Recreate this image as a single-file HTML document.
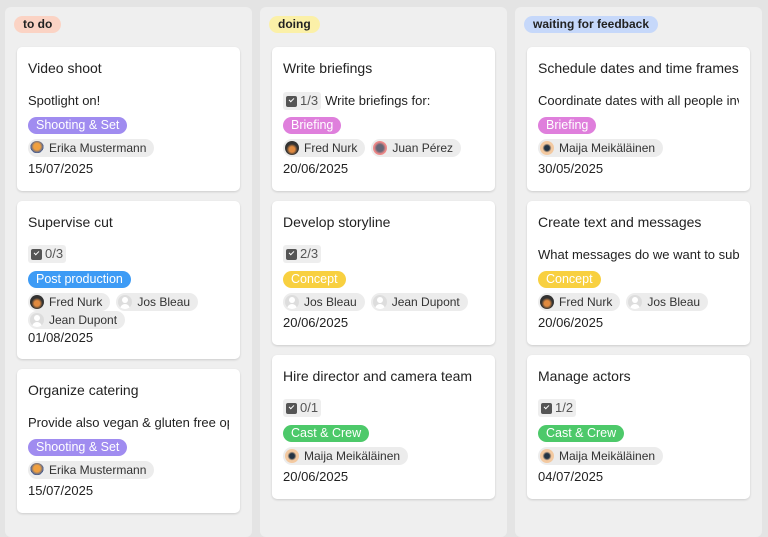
<!DOCTYPE html>
<html><head><meta charset="utf-8"><style>
*{box-sizing:border-box;margin:0;padding:0}
body{width:768px;height:528px;overflow:hidden;background:#e4e4e4;font-family:"Liberation Sans",sans-serif;color:#222;position:relative}
.col{position:absolute;top:7px;width:247px;height:530px;background:#efefef;border-radius:6px}
.hd{position:absolute;top:9px;left:9px;height:17px;line-height:17px;padding:0 9px;border-radius:9px;font-size:12px;font-weight:bold;color:#222}
.card{position:absolute;left:12px;width:223px;background:#fff;border-radius:5px;box-shadow:0 1px 2px rgba(0,0,0,.15);padding:0 11px;overflow:hidden;white-space:nowrap}
.t{position:absolute;top:12px;left:11px;font-size:14px;line-height:18px}
.r2{position:absolute;top:44px;left:11px;width:201px;overflow:hidden;font-size:13px;line-height:20px;display:flex;align-items:center}
.ck{display:inline-flex;align-items:center;background:#eee;border-radius:3px;padding:0 3px;height:18px;color:#555;font-size:13px;margin-right:4px}
.ck i{display:inline-block;width:11px;height:11px;background:#555;border-radius:2px;margin-right:3px;position:relative}
.ck i:after{content:"";position:absolute;left:3px;top:2px;width:4px;height:2px;border-left:1.5px solid #fff;border-bottom:1.5px solid #fff;transform:rotate(-45deg)}
.tag{position:absolute;top:70px;left:11px;height:17px;line-height:17px;padding:0 8px;border-radius:9px;color:#fff;font-size:12.5px}
.ppl{position:absolute;top:92px;left:11px;width:210px;display:flex;flex-wrap:wrap;gap:0 6px}
.p{display:inline-flex;align-items:center;height:18px;background:#ececec;border-radius:9px;padding:0 8px 0 2px;font-size:12px;color:#333}
.av{width:14px;height:14px;border-radius:50%;margin-right:5px;background:#ddd;position:relative;overflow:hidden}
.u:before{content:"";position:absolute;left:4px;top:2px;width:6px;height:6px;border-radius:50%;background:#fff}
.u:after{content:"";position:absolute;left:2px;top:9px;width:10px;height:8px;border-radius:5px 5px 0 0;background:#fff}
.e{background:radial-gradient(circle at 50% 40%,#f0a040 30%,#3a5a9a 60%,#eee 61%)}
.f{background:radial-gradient(circle at 50% 60%,#e08a40 25%,#333 50%)}
.j{background:radial-gradient(circle at 50% 50%,#667 35%,#e88 60%)}
.m{background:radial-gradient(circle at 50% 50%,#234 25%,#f3c9a0 45%)}
.d{position:absolute;top:113px;left:11px;font-size:13px;line-height:18px}
</style></head><body>

<div class="col" style="left:5px">
<div class="hd" style="background:#fbd3c4">to do</div>
<div class="card" style="top:40px;height:144px"><div class="t">Video shoot</div><div class="r2">Spotlight on!</div><div class="tag" style="background:#a08cf0">Shooting &amp; Set</div><div class="ppl"><span class="p"><span class="av e"></span>Erika Mustermann</span></div><div class="d">15/07/2025</div></div>
<div class="card" style="top:194px;height:158px"><div class="t">Supervise cut</div><div class="r2"><span class="ck"><i></i>0/3</span></div><div class="tag" style="background:#3d9bf5">Post production</div><div class="ppl"><span class="p"><span class="av f"></span>Fred Nurk</span><span class="p"><span class="av u"></span>Jos Bleau</span><span class="p"><span class="av u"></span>Jean Dupont</span></div><div class="d" style="top:128px">01/08/2025</div></div>
<div class="card" style="top:362px;height:144px"><div class="t">Organize catering</div><div class="r2">Provide also vegan &amp; gluten free op</div><div class="tag" style="background:#a08cf0">Shooting &amp; Set</div><div class="ppl"><span class="p"><span class="av e"></span>Erika Mustermann</span></div><div class="d">15/07/2025</div></div>
</div>

<div class="col" style="left:260px">
<div class="hd" style="background:#fbf0a8">doing</div>
<div class="card" style="top:40px;height:144px"><div class="t">Write briefings</div><div class="r2"><span class="ck"><i></i>1/3</span>Write briefings for:</div><div class="tag" style="background:#df7fdc">Briefing</div><div class="ppl"><span class="p"><span class="av f"></span>Fred Nurk</span><span class="p"><span class="av j"></span>Juan Pérez</span></div><div class="d">20/06/2025</div></div>
<div class="card" style="top:194px;height:144px"><div class="t">Develop storyline</div><div class="r2"><span class="ck"><i></i>2/3</span></div><div class="tag" style="background:#f8d040">Concept</div><div class="ppl"><span class="p"><span class="av u"></span>Jos Bleau</span><span class="p"><span class="av u"></span>Jean Dupont</span></div><div class="d">20/06/2025</div></div>
<div class="card" style="top:348px;height:144px"><div class="t">Hire director and camera team</div><div class="r2"><span class="ck"><i></i>0/1</span></div><div class="tag" style="background:#4dc96a">Cast &amp; Crew</div><div class="ppl"><span class="p"><span class="av m"></span>Maija Meikäläinen</span></div><div class="d">20/06/2025</div></div>
</div>

<div class="col" style="left:515px">
<div class="hd" style="background:#c6d8fa">waiting for feedback</div>
<div class="card" style="top:40px;height:144px"><div class="t">Schedule dates and time frames</div><div class="r2">Coordinate dates with all people inv</div><div class="tag" style="background:#df7fdc">Briefing</div><div class="ppl"><span class="p"><span class="av m"></span>Maija Meikäläinen</span></div><div class="d">30/05/2025</div></div>
<div class="card" style="top:194px;height:144px"><div class="t">Create text and messages</div><div class="r2">What messages do we want to subr</div><div class="tag" style="background:#f8d040">Concept</div><div class="ppl"><span class="p"><span class="av f"></span>Fred Nurk</span><span class="p"><span class="av u"></span>Jos Bleau</span></div><div class="d">20/06/2025</div></div>
<div class="card" style="top:348px;height:144px"><div class="t">Manage actors</div><div class="r2"><span class="ck"><i></i>1/2</span></div><div class="tag" style="background:#4dc96a">Cast &amp; Crew</div><div class="ppl"><span class="p"><span class="av m"></span>Maija Meikäläinen</span></div><div class="d">04/07/2025</div></div>
</div>
</body></html>
